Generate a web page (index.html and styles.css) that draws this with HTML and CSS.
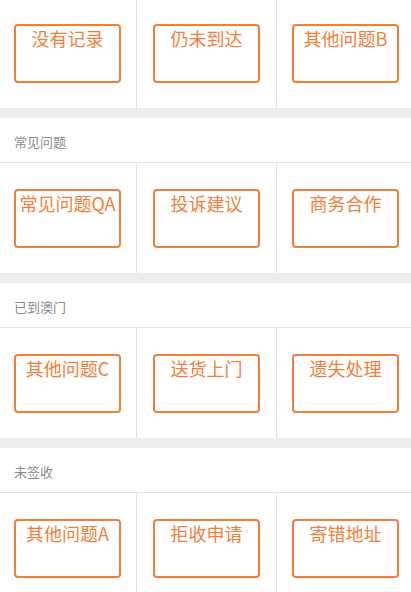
FILE: index.html
```html
<!DOCTYPE html>
<html lang="zh-CN">
<head>
  <meta charset="UTF-8" />
  <meta name="viewport" content="width=device-width, initial-scale=1.0"/>
  <title>问题分类</title>
  <link rel="stylesheet" href="styles.css">
</head>
<body>
  <div class="page">
    <div class="grid first">
      <div class="cell"><a class="btn">没有记录</a></div>
      <div class="cell"><a class="btn">仍未到达</a></div>
      <div class="cell"><a class="btn">其他问题B</a></div>
    </div>

    <div class="gap"></div>
    <div class="section-title"><span>常见问题</span></div>
    <div class="grid">
      <div class="cell"><a class="btn">常见问题QA</a></div>
      <div class="cell"><a class="btn">投诉建议</a></div>
      <div class="cell"><a class="btn">商务合作</a></div>
    </div>

    <div class="gap"></div>
    <div class="section-title"><span>已到澳门</span></div>
    <div class="grid">
      <div class="cell"><a class="btn">其他问题C</a></div>
      <div class="cell"><a class="btn">送货上门</a></div>
      <div class="cell"><a class="btn">遗失处理</a></div>
    </div>

    <div class="gap"></div>
    <div class="section-title"><span>未签收</span></div>
    <div class="grid">
      <div class="cell"><a class="btn">其他问题A</a></div>
      <div class="cell"><a class="btn">拒收申请</a></div>
      <div class="cell"><a class="btn">寄错地址</a></div>
    </div>
  </div>
</body>
</html>
```

FILE: styles.css
```css
:root {
  --orange: #ef7f3c;
  --line: #e3e3e3;
  --band: #ededed;
  --muted: #8a8a8a;
}

* {
  margin: 0;
  padding: 0;
  box-sizing: border-box;
}
body {
  font-family: "Noto Sans CJK SC", "Liberation Sans", sans-serif;
  background: #fff;
  overflow: hidden;
}

.page {
  margin-top: -3px;
}

.gap {
  height: 10px;
  background: var(--band);
}

.section-title {
  height: 44px;
  display: flex;
  align-items: center;
  padding-left: 14px;
  padding-top: 3px;
  font-size: 13px;
  color: var(--muted);
}

.grid {
  display: grid;
  grid-template-columns: 137px 140px 1fr;
  border-top: 1px solid var(--line);
}
.cell {
  padding: 26px 0 25px 16px;
  border-right: 1px solid var(--line);
}
.cell:first-child {
  padding-left: 14px;
}
.cell:last-child {
  padding-left: 15px;
  border-right: none;
}

.btn {
  display: block;
  width: 107px;
  height: 59px;
  border: 2px solid var(--orange);
  border-radius: 4px;
  color: var(--orange);
  font-size: 18px;
  line-height: 24px;
  padding-top: 0;
  text-align: center;
  white-space: nowrap;
  text-decoration: none;
}
```
